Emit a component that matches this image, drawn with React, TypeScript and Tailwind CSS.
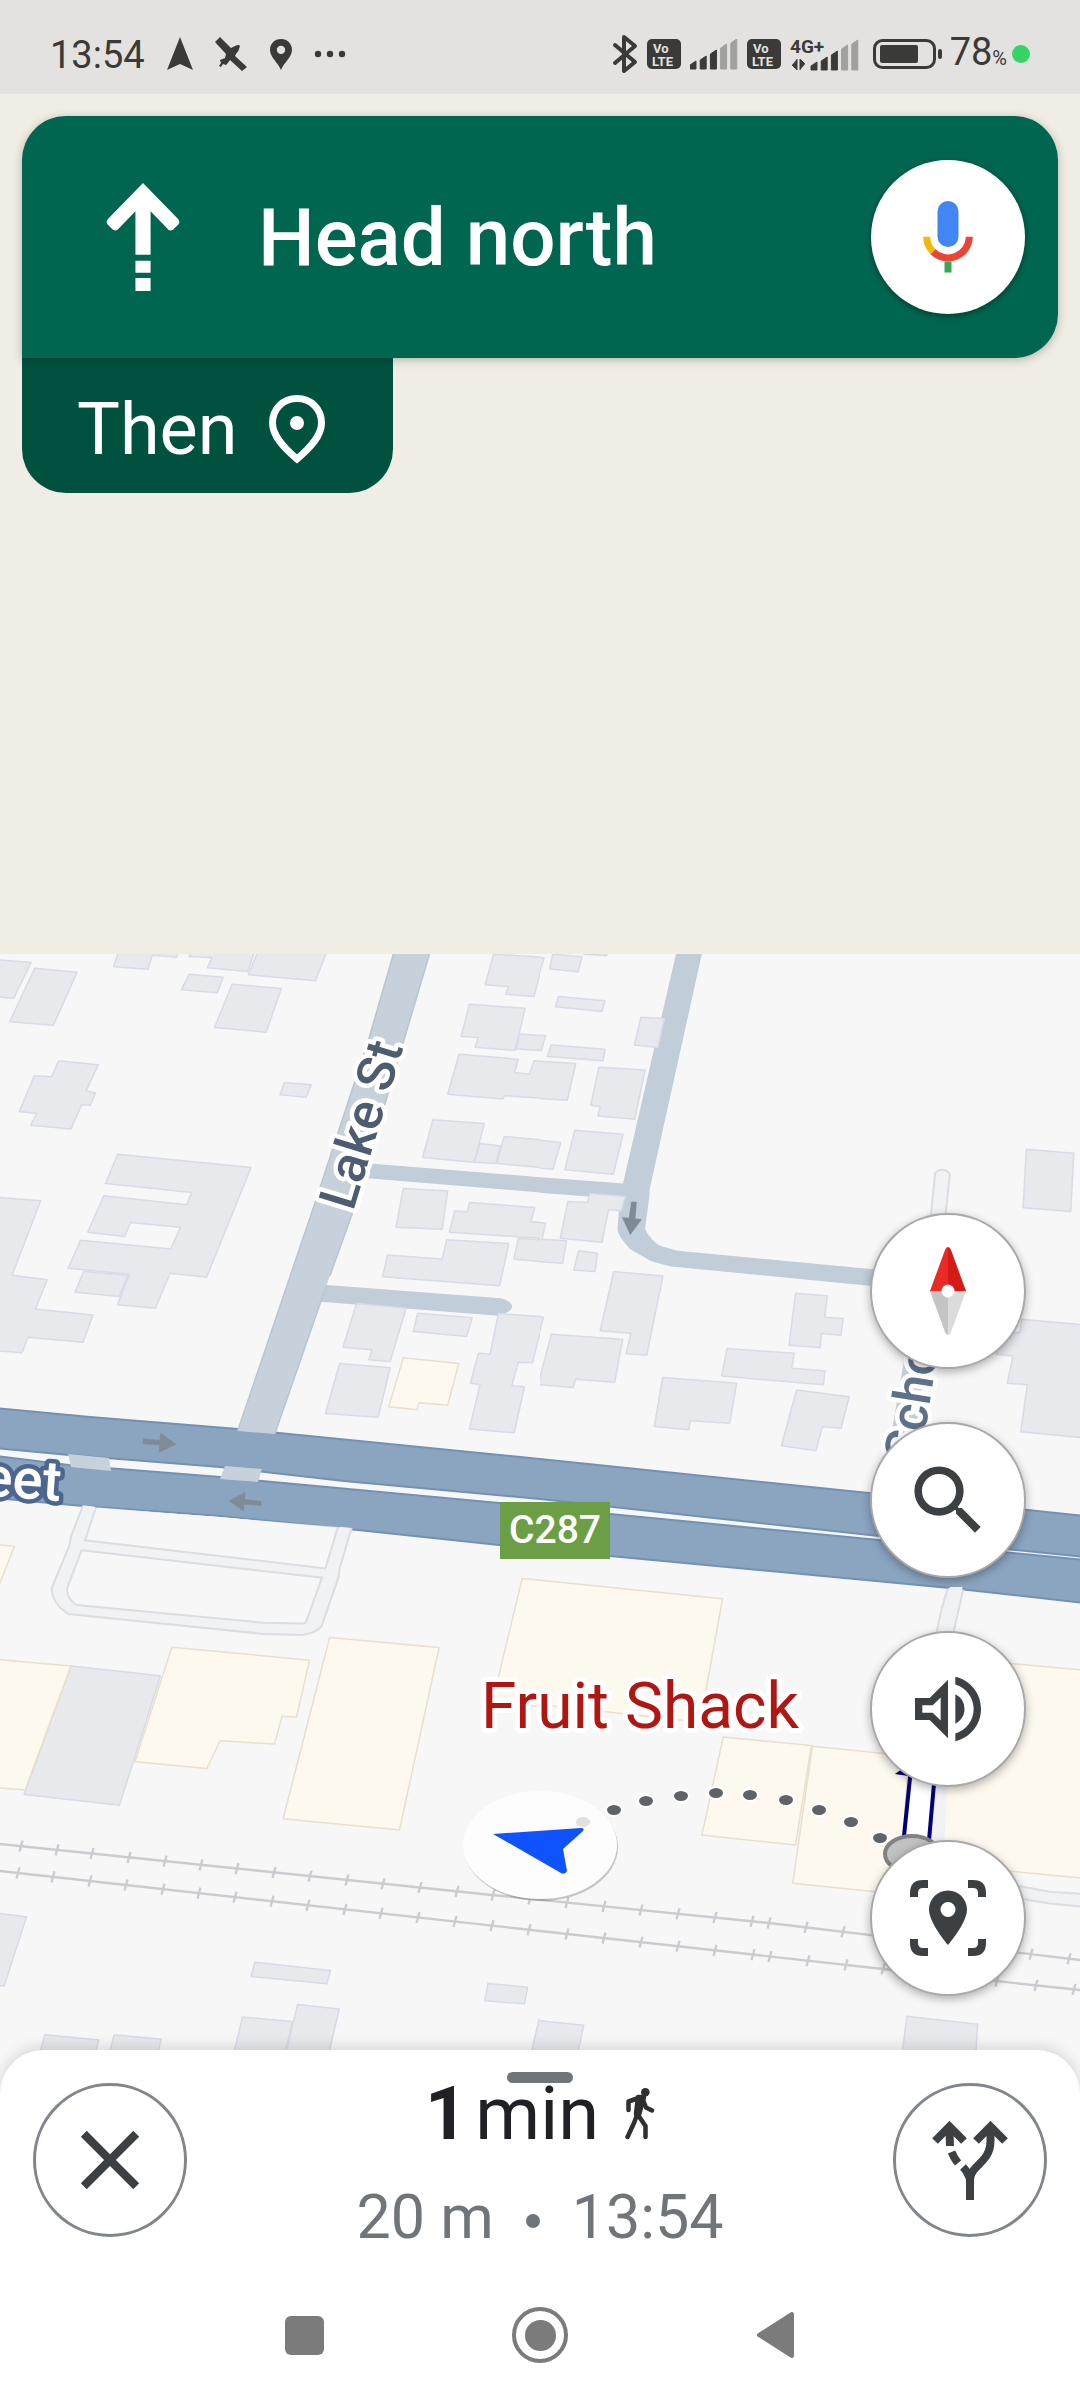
import type { ReactNode } from "react";
import { MdClose, MdOutlineVolumeUp, MdSearch } from "react-icons/md";

const INK = "#3a3a38";

/* ---------- status bar ---------- */

function VoLte() {
  return (
    <svg width="34" height="30" viewBox="0 0 34 30" aria-label="VoLTE">
      <rect width="34" height="30" rx="5" fill={INK} />
      <text x="6" y="14" fontSize="13" fontWeight="700" fill="#e3e2e0" fontFamily="Roboto, sans-serif">Vo</text>
      <text x="5" y="27" fontSize="13" fontWeight="700" fill="#e3e2e0" fontFamily="Roboto, sans-serif">LTE</text>
    </svg>
  );
}

function Bars({ x = 0, from = 0 }: { x?: number; from?: number }) {
  const heights = [8, 13, 19, 25, 30];
  return (
    <g>
      {heights.map((h, i) => {
        const l = x + i * 10.2;
        return (
          <path
            key={h}
            d={`M${l} ${30}V${30 - h + 4}l6-4V30z`}
            fill={i < 3 ? INK : "#a0a09e"}
            stroke={i < 3 ? INK : "#a0a09e"}
            strokeWidth="1"
            strokeLinejoin="round"
            transform={`translate(0 ${from})`}
          />
        );
      })}
    </g>
  );
}

function StatusBar() {
  return (
    <header className="flex h-[94px] items-center justify-between bg-[#e3e2e0] pt-[14px] pr-[50px] pl-[50px] text-[#3a3a38]">
      <div className="flex items-center gap-[22px]">
        <span className="pt-[2px] text-[38px] leading-10">13:54</span>
        <svg width="26" height="34" viewBox="0 0 26 34" fill={INK} aria-hidden="true">
          <path d="M13 0 26 33 13 27 0 33z" />
        </svg>
        <svg width="33" height="34" viewBox="0 0 33 34" fill={INK} aria-hidden="true">
          <path d="M0 5 5 0l11 11 4-2q4-2 5 0-1 5-4 8l-1 2 12 11-5 4-12-11q-2 3-4 5l-3-1-2 3-2-1 2-3q-1-2-1-3l5-2 1-4z" />
        </svg>
        <svg width="22" height="31" viewBox="5 2 14 20" fill={INK} preserveAspectRatio="none" aria-hidden="true">
          <path d="M12 2C8 2 5 5 5 9c0 5 5 8 7 13 2-5 7-8 7-13 0-4-3-7-7-7zm0 9.700a2.700 2.700 0 1 1 0-5.400 2.700 2.700 0 0 1 0 5.400z" />
        </svg>
        <svg width="32" height="8" viewBox="0 0 32 8" fill={INK} aria-hidden="true">
          <circle cx="4" cy="4" r="3.200" />
          <circle cx="16" cy="4" r="3.200" />
          <circle cx="28" cy="4" r="3.200" />
        </svg>
      </div>
      <div className="flex items-center gap-[9px]">
        <svg width="26" height="40" viewBox="0 0 26 40" fill="none" stroke={INK} strokeWidth="4" strokeLinecap="round" strokeLinejoin="round" aria-label="Bluetooth">
          <path d="M3 11 23 28 12 37V3L23 12 3 29" />
        </svg>
        <VoLte />
        <svg width="48" height="31" viewBox="0 0 48 31" aria-label="Signal 1">
          <Bars />
        </svg>
        <VoLte />
        <svg width="70" height="42" viewBox="0 -4 70 42" aria-label="Signal 2">
          <text x="0" y="16" fontSize="19" fontWeight="700" fill={INK} fontFamily="Roboto, sans-serif">4G+</text>
          <path d="M2 28l5 5V22M10 33V22l5 5" fill={INK} stroke={INK} strokeWidth="1" />
          <Bars x={21} from={3} />
        </svg>
        <svg width="70" height="30" viewBox="0 0 70 30" className="ml-1" aria-label="Battery">
          <rect x="1.500" y="1.500" width="60" height="27" rx="8" fill="none" stroke={INK} strokeWidth="3" />
          <rect x="7" y="6" width="38" height="18" rx="2" fill={INK} />
          <rect x="65" y="10" width="4" height="10" rx="2" fill={INK} />
        </svg>
        <div className="-ml-[2px] flex items-baseline pt-[2px]">
          <span className="text-[38px] leading-10">78</span>
          <span className="text-[20px] leading-10">%</span>
        </div>
        <span className="-ml-1 size-[18px] rounded-full bg-[#36d366]" />
      </div>
    </header>
  );
}

/* ---------- directions ---------- */

function Directions() {
  return (
    <section className="h-[860px] shrink-0 px-[22px] pt-[22px] text-white">
      <div className="relative flex h-[242px] items-center rounded-[44px] rounded-bl-none bg-[#00664f] pr-[33px] pl-[84px] shadow-[0_2px_10px_rgba(0,0,0,0.25)]">
        <svg width="74" height="108" viewBox="0 0 72 107" fill="#fff" aria-hidden="true">
          <path d="M36 0 71 36q2 3 0 5l-5 5q-3 2-5 0L43.500 28V71h-15V28L11 46q-2 2-5 0l-5-5q-2-2 0-5zM28.500 77h15v12h-15zM28.500 94h15v13h-15z" />
        </svg>
        <h1 className="ml-[78px] flex-1 pt-[2px] text-[80px] leading-[96px] font-medium">Head north</h1>
        <button type="button" aria-label="Voice search" className="flex size-[154px] items-center justify-center rounded-full bg-white shadow-[0_2px_6px_rgba(0,0,0,0.4)]">
          <svg width="50" height="72" viewBox="0 0 50 72" fill="none" aria-hidden="true">
            <rect x="14.500" width="21" height="46" rx="10.500" fill="#4285f4" />
            <path d="M3.700 35.700A21.300 21.300 0 0 0 10 50.700" stroke="#f4b70a" strokeWidth="7" />
            <path d="M10 50.700A21.300 21.300 0 0 0 46.300 35.700" stroke="#ea4637" strokeWidth="7" />
            <path d="M25 60.500V71.500" stroke="#34a853" strokeWidth="7" />
          </svg>
        </button>
      </div>
      <div className="flex h-[135px] w-[371px] items-center gap-[31px] rounded-b-[44px] bg-[#00523f] pt-2 pl-[55px]">
        <span className="text-[72px] leading-[80px]">Then</span>
        <svg width="56" height="70" viewBox="0 0 56 70" fill="none" stroke="#fff" strokeWidth="7" aria-hidden="true">
          <path d="M28 3.500C14 3.500 3.500 14 3.500 28 3.500 41 15 53 28 64 41 53 52.500 41 52.500 28 52.500 14 42 3.500 28 3.500z" />
          <circle cx="28" cy="28" r="7" fill="#fff" stroke="none" />
        </svg>
      </div>
    </section>
  );
}

/* ---------- map ---------- */

const GREY_NW = [
  "-10,55 90,63 40,163 -10,160",
  "101,79 224,90 155,239 28,229",
  "345,30 520,30 513,48 442,43 430,82 330,75",
  "555,30 740,30 719,88 602,78 616,50 549,46",
  "750,30 950,30 916,114 721,97",
  "549,96 648,104 631,148 527,139",
  "674,124 817,136 773,258 623,245",
  "170,338 286,349 249,423 277,428 262,463 237,461 206,529 89,519 106,486 56,480 100,380 150,383",
  "826,399 904,405 889,440 813,433",
  "342,600 729,637 600,944 494,933 451,1031 341,1021 376,936 198,919 234,841 496,865 524,804 379,791 362,830 255,818 301,716 542,741 557,707 306,682",
  "243,928 371,939 346,998 218,986",
  "-10,720 118,730 35,939 137,951 103,1033 270,1050 241,1126 81,1112 64,1156 -10,1150",
  "1433,40 1580,48 1551,158 1469,152 1476,130 1409,125",
  "1363,180 1525,191 1496,309 1380,300 1388,273 1339,270",
  "1509,263 1580,268 1580,310 1499,305",
  "1333,320 1505,334 1494,372 1537,375 1551,338 1580,340 1580,443 1464,436 1460,445 1300,432",
  "1257,503 1406,514 1377,622 1227,609",
  "1394,570 1453,576 1440,626 1377,622",
  "1464,550 1580,560 1580,638 1443,626",
  "1171,696 1300,703 1284,810 1150,804",
  "1363,735 1553,749 1541,788 1580,792 1580,836 1305,818 1320,759 1357,761",
  "1297,839 1477,850 1451,968 1111,943 1125,882 1284,893",
  "1505,836 1580,840 1580,901 1492,894",
  "1035,1018 1179,1031 1133,1180 1071,1175 1080,1147 996,1140",
  "1213,1045 1371,1058 1355,1110 1200,1096",
  "986,1186 1133,1198 1098,1336 945,1326",
  "1447,1046 1580,1055 1546,1184 1505,1182 1486,1248 1523,1251 1493,1380 1363,1369 1394,1245 1366,1241 1389,1157 1423,1159",
];

const GREY_NE = [
  "37,40 122,47 111,89 28,81",
  "-10,46 12,50 -10,120",
  "120,38 195,38 193,44 130,40",
  "54,158 189,170 180,200 45,187",
  "-10,265 16,268 4,310 -10,308",
  "32,294 189,306 183,338 22,326",
  "-10,339 104,346 79,449 -10,443",
  "293,216 361,220 342,301 274,294",
  "171,356 305,364 275,502 168,493 175,466 147,463",
  "101,533 241,544 213,656 72,643",
  "-10,560 60,567 38,642 -10,638",
  "145,710 247,718 236,758 199,755 180,846 59,835 81,732 138,735",
  "-10,790 16,793 6,838 77,842 66,905 -10,900",
  "112,870 167,877 160,928 98,925",
  "214,928 357,941 310,1163 250,1158 264,1101 175,1094",
  "-10,1052 10,1056 -5,1110 -10,1110",
  "33,1104 240,1118 217,1238 103,1230 97,1253 -6,1245",
  "356,1225 571,1241 551,1353 436,1346 432,1371 332,1362",
  "543,1144 738,1157 731,1199 827,1206 823,1245 527,1221",
  "742,989 834,996 827,1056 880,1060 874,1107 817,1102 814,1141 723,1135",
  "745,1260 898,1279 874,1367 820,1363 801,1430 701,1416",
  "1412,586 1550,597 1541,760 1403,750",
  "1399,1062 1580,1078 1580,1394 1396,1377 1415,1245 1357,1241 1373,1165 1325,1160 1340,1095 1394,1100",
];

const GREY_SW = [
  "206,503 466,529 347,879 70,850",
  "-10,1171 77,1181 12,1368 -10,1366",
  "740,1304 960,1326 949,1362 729,1342",
  "864,1418 985,1430 945,1590 820,1590",
  "704,1452 850,1464 815,1590 668,1590",
  "130,1500 287,1514 262,1600 100,1600",
  "331,1500 468,1512 445,1600 305,1600",
  "1417,1361 1532,1371 1523,1416 1408,1408",
  "1565,1458 1700,1470 1680,1600 1530,1600",
];

const GREY_SE = [
  "-10,1461 127,1474 100,1590 -10,1590",
  "1065,1450 1271,1471 1262,1600 1045,1600",
];

const SAND_NW = ["1171,1170 1332,1186 1300,1303 1217,1296 1211,1315 1129,1307"];

const SAND_SW = [
  "-10,175 42,179 -5,290 -10,290",
  "-10,485 206,503 73,838 -10,832",
  "499,452 899,487 861,641 819,639 797,714 639,705 601,780 392,762",
  "957,426 1275,453 1160,946 822,916",
  "1516,267 1600,272 1600,615 1430,600",
];

const SAND_SE = [
  "-10,270 530,321 465,655 -10,606",
  "532,695 788,718 742,987 470,960",
  "791,720 1070,746 1045,1120 734,1090",
  "1190,480 1366,496 1590,515 1590,1078 1370,1058 1165,1040",
];

function Buildings({ shapes, sand = false }: { shapes: string[]; sand?: boolean }) {
  return (
    <g fill={sand ? "#fdf9ef" : "#e8e9ed"} stroke={sand ? "#e8dfcc" : "#d8dbe7"} strokeWidth="1.500" strokeLinejoin="round">
      {shapes.map((points) => (
        <polygon key={points} points={points} vectorEffect="non-scaling-stroke" />
      ))}
    </g>
  );
}

/* Each quadrant of the map is surveyed in its own 1568-unit grid. */
function Quadrant({ x, south = false, children }: { x: number; south?: boolean; children: ReactNode }) {
  return (
    <svg
      x={x}
      y={south ? 1490 : 940}
      width="540"
      height={south ? 570 : 550}
      viewBox={south ? "0 27 1568 1541" : "0 0 1568 1540"}
      preserveAspectRatio="none"
    >
      {children}
    </svg>
  );
}

type Pt = [number, number];

const RAIL_A: Pt[] = [[0, 1844], [492, 1895], [769, 1923], [1080, 1960]];
const RAIL_B: Pt[] = [[0, 1871], [540, 1931], [883, 1969], [1080, 1990]];
const TIES_A = [21, 57, 92, 129, 165, 201, 237, 274, 310, 347, 383, 420, 457, 493, 530, 567, 604, 641, 678, 715, 752, 769, 806, 843, 880, 1031, 1069];
const TIES_B = [18, 53, 90, 126, 163, 199, 235, 272, 308, 345, 381, 418, 455, 492, 529, 567, 604, 641, 678, 715, 753, 770, 808, 846, 883, 997, 1036, 1074];

function railY(line: Pt[], x: number) {
  const i = Math.max(1, line.findIndex((p) => p[0] >= x));
  const [x0, y0] = line[i - 1];
  const [x1, y1] = line[i];
  return y0 + ((y1 - y0) * (x - x0)) / (x1 - x0);
}

function Rail({ line, ties }: { line: Pt[]; ties: number[] }) {
  return (
    <g fill="none" stroke="#cacccf" strokeWidth="2.400">
      <polyline points={line.map((p) => p.join(",")).join(" ")} />
      {ties.map((x) => {
        const y = railY(line, x);
        return <line key={x} x1={x + 1.500} y1={y - 5.500} x2={x - 1.500} y2={y + 5.500} />;
      })}
    </g>
  );
}

const WALK: Pt[] = [[614, 1810], [646, 1801], [681, 1796], [716, 1793], [750, 1795], [786, 1800], [819, 1810], [851, 1822], [880, 1838]];

function MapView() {
  return (
    <svg className="absolute inset-0 size-full" viewBox="0 954 1080 1144" preserveAspectRatio="xMidYMin slice" fontFamily="Roboto, sans-serif" role="img" aria-label="Map">
      <rect x="0" y="954" width="1080" height="1144" fill="#f7f7f7" />

      <Rail line={RAIL_A} ties={TIES_A} />
      <Rail line={RAIL_B} ties={TIES_B} />

      {/* C287, two carriageways */}
      <g fill="#8ba4c0" stroke="#7391b3" strokeWidth="2">
        <path d="M-5 1408 90 1417 238 1429 540 1459 869 1493 1085 1516V1557L879 1536 540 1499 344 1481 220 1467 69 1455-5 1448z" />
        <path d="M-5 1456 69 1465 220 1477 499 1503 610 1514 879 1540 1085 1560V1603L950 1588 610 1556 499 1545 339 1528 220 1516 83 1506-5 1498z" />
      </g>
      <g fill="#c6d1dc">
        <path d="M68 1454 109 1458 111 1471 71 1467z" />
        <path d="M225 1466 262 1469 258 1482 220 1479z" />
      </g>

      <Quadrant x={0}>
        <path d="M1075 626 1580 665V708L1068 667zM948 966 1455 1003Q1487 1012 1487 1028 1480 1045 1447 1052L930 1013z" fill="#c1cdd9" />
        <path d="M1145 30 1070 280 915 735 690 1375 798 1383 948 967 1025 760 1170 290 1250 30z" fill="#c6d1dc" />
        <path d="M1145 30 1070 280 915 735 690 1375M798 1383 948 967M958 940 1025 760 1170 290 1250 30" fill="none" stroke="#b8c6cf" strokeWidth="1.500" vectorEffect="non-scaling-stroke" />
        <Buildings shapes={GREY_NW} />
        <Buildings shapes={SAND_NW} sand />
        <path d="M415 1396 463 1400 466 1380 512 1412 461 1436 463 1415 415 1411z" fill="#808b98" />
      </Quadrant>

      <Quadrant x={540}>
        <path d="M397 30H472L318 700V715L305 810Q325 845 350 857L400 870 1000 925V972L380 914 325 900 262 866Q228 830 225 812L230 750 243 720 140 718-5 707V664L241 682z" fill="#c1cdd9" />
        <path d="M1062 1150 1125 1150 1080 1440 1010 1440z" fill="#c1cdd9" />
        <path d="M1133 790 1147 655Q1152 643 1168 643 1188 645 1190 658L1175 790z" fill="#f1f2f4" stroke="#dcdde1" strokeWidth="2" vectorEffect="non-scaling-stroke" />
        <Buildings shapes={GREY_NE} />
        <path d="M265 733H281L277 780 296 782 262 826 238 776 258 778z" fill="#808b98" />
      </Quadrant>

      <Quadrant x={0} south>
        <g fill="#f1f2f4" stroke="#dcdde1" strokeWidth="2">
          <path d="M240 72 207 150 200 180 150 292Q152 335 198 362L765 416 880 419Q920 412 934 395L984 260 986 240 1020 132 984 130 278 76z" vectorEffect="non-scaling-stroke" />
          <g fill="#f7f7f7">
            <path d="M278 76 247 163 945 239 980 130 640 100z" stroke="none" />
            <path d="M278 76 247 163 945 239 980 130" vectorEffect="non-scaling-stroke" />
            <path d="M237 190 935 264 890 380Q888 388 875 388L765 386 222 338Q192 318 195 292z" vectorEffect="non-scaling-stroke" />
          </g>
        </g>
        <path d="M243 68 277 72 274 84 238 80zM986 127 1018 130 1014 142 982 140z" fill="#f1f2f4" />
        <Buildings shapes={GREY_SW} />
        <Buildings shapes={SAND_SW} sand />
        <path d="M664 56 713 32 711 52 759 57 758 70 709 66 708 85z" fill="#808b98" />
      </Quadrant>

      <Quadrant x={540} south>
        <path d="M1192 289H1227L1198 430H1150Q1165 350 1185 294z" fill="#f1f2f4" />
        <path d="M1229 296 1196 430M1148 430Q1163 350 1184 294" fill="none" stroke="#dcdde1" strokeWidth="2" vectorEffect="non-scaling-stroke" />
        <Buildings shapes={GREY_SE} />
        <Buildings shapes={SAND_SE} sand />
        <path d="M1072 780H1186L1170 1040H1045z" fill="#f1f2f4" />
        <path d="M1380 1096 1480 1113 1580 1119V1154L1480 1145 1380 1130z" fill="#f1f2f4" stroke="#dcdde1" strokeWidth="2" vectorEffect="non-scaling-stroke" />
        <path d="M1076 790H1148L1128 980H1055z" fill="#fff" />
        <path d="M1076 790 1055 980M1146 800 1129 980" stroke="#00007a" strokeWidth="4" vectorEffect="non-scaling-stroke" />
        <path d="M1030 795 1062 775 1085 802z" fill="#00007a" />
      </Quadrant>

      <ellipse cx="912" cy="1854" rx="27" ry="18" fill="#c1c1c1" stroke="#828282" strokeWidth="4" />

      {WALK.map(([x, y]) => (
        <ellipse key={x} cx={x} cy={y} rx="8" ry="6" fill="#5f6368" stroke="#fff" strokeWidth="2" />
      ))}

      {/* labels */}
      <g strokeLinejoin="round" paintOrder="stroke" fontWeight="500">
        <text transform="translate(353 1212) rotate(-73)" fontSize="52" fill="#4d5c70" stroke="#fff" strokeWidth="9">Lake St</text>
        <text transform="translate(920 1464) rotate(-81)" fontSize="52" fill="#5f708a" stroke="#fff" strokeWidth="9">School</text>
        <text transform="translate(60 1501) rotate(4)" textAnchor="end" fontSize="56" fill="#fff" stroke="#4c6690" strokeWidth="9">Street</text>
        <text x="481" y="1728" fontSize="64" fontWeight="400" fill="#b01713" stroke="#fff" strokeWidth="10">Fruit Shack</text>
      </g>
      <rect x="500" y="1502" width="110" height="57" fill="#6c9f45" />
      <text x="555" y="1543" textAnchor="middle" fontSize="39" fontWeight="500" fill="#fff">C287</text>

      {/* position puck */}
      <ellipse cx="541" cy="1847" rx="77" ry="54" fill="#000" opacity="0.2" />
      <ellipse cx="540" cy="1845" rx="77" ry="54" fill="#fdfdfd" />
      <ellipse cx="583" cy="1822" rx="7" ry="5" fill="#dfe0e1" />
      <path d="M493 1834 581 1828Q585 1828 583 1831L563 1849 567 1871Q565 1875 561 1873z" fill="#0f53ff" />
    </svg>
  );
}

function Fab({ label, children }: { label: string; children: ReactNode }) {
  return (
    <button
      type="button"
      aria-label={label}
      className="flex size-[156px] items-center justify-center rounded-full border-2 border-[#a8a8a8] bg-white text-[#3c4043] shadow-[0_3px_10px_rgba(0,0,0,0.3)]"
    >
      {children}
    </button>
  );
}

function MapSection() {
  return (
    <main className="relative min-h-[1144px] flex-1 overflow-hidden bg-[#f7f7f7]">
      <MapView />
      <div className="absolute top-[259px] right-[54px] flex flex-col gap-[53px]">
        <Fab label="Compass">
          <svg width="36" height="88" viewBox="0 0 36 88" aria-hidden="true">
            <path d="M18 0Q16 0 15 3L0 44H18z" fill="#ea2a26" />
            <path d="M18 0Q20 0 21 3L36 44H18z" fill="#d51b17" />
            <path d="M0 44H18V88Q16 88 15 85z" fill="#c4c4c4" />
            <path d="M36 44H18V88Q20 88 21 85z" fill="#dbdbdb" />
            <circle cx="18" cy="44" r="6.500" fill="#fff" />
          </svg>
        </Fab>
        <Fab label="Search">
          <MdSearch size={91} />
        </Fab>
        <Fab label="Sound">
          <MdOutlineVolumeUp size={88} />
        </Fab>
        <Fab label="Live View">
          <svg width="76" height="76" viewBox="0 0 76 76" fill="none" aria-hidden="true">
            <path d="M4 17V13Q4 4 13 4H18M58 4H63Q72 4 72 13V17M72 59V63Q72 72 63 72H58M18 72H13Q4 72 4 63V59" stroke="currentColor" strokeWidth="8" />
            <path
              transform="translate(5.400 5)"
              d="M32.600 5.400C22 5.400 13.600 14 13.600 24.500 13.600 38 32.600 60 32.600 60S51.600 38 51.600 24.500C51.600 14 43.200 5.400 32.600 5.400zM32.600 32a7.500 7.500 0 1 1 0-15 7.500 7.500 0 0 1 0 15z"
              fill="currentColor"
            />
          </svg>
        </Fab>
      </div>
    </main>
  );
}

/* ---------- trip sheet ---------- */

function TripSheet() {
  return (
    <section className="relative -mt-12 flex h-[350px] shrink-0 flex-col rounded-t-[44px] bg-white shadow-[0_-4px_14px_rgba(0,0,0,0.12)]">
      <div className="flex items-start justify-between px-[33px] pt-[33px]">
        <button type="button" aria-label="Close" className="flex size-[154px] items-center justify-center rounded-full border-3 border-[#80868b] text-[#3c4043]">
          <MdClose size={100} />
        </button>
        <div className="flex flex-col items-center">
          <div className="flex items-center gap-[26px] text-[#202124]">
            <p className="flex gap-2 text-[74px] leading-[62px]">
              <span className="font-bold">1</span>
              <span>min</span>
            </p>
            <svg width="30" height="52" viewBox="0 0 30 52" fill="none" stroke="#303030" strokeWidth="4.500" strokeLinecap="round" strokeLinejoin="round" aria-label="Walking">
              <circle cx="20.300" cy="4.300" r="4.300" fill="#303030" stroke="none" />
              <path d="M3.500 22V13.500L15 9.500" />
              <path d="M13 9 19 9 14 27 11 26z" fill="#303030" />
              <path d="M18 12 21 19.500 27 22.500" />
              <path d="M12 27 9 35 2.500 49" />
              <path d="M13 27 20.500 38V49" />
            </svg>
          </div>
          <p className="mt-[36px] flex gap-[32px] text-[61px] leading-[72px] text-[#70757a]">
            <span>20 m</span>
            <span className="mt-[33px] size-[14px] rounded-full bg-[#70757a]" />
            <span>13:54</span>
          </p>
        </div>
        <button type="button" aria-label="Alternative routes" className="flex size-[154px] items-center justify-center rounded-full border-3 border-[#80868b] text-[#3c4043]">
          <svg width="76" height="79" viewBox="0 0 76 79" fill="none" stroke="currentColor" strokeWidth="8" aria-hidden="true">
            <path d="M3 20 17.500 5.500 32 20M44 20 58.500 5.500 73 20" />
            <path d="M58.500 8V20C58.500 42 38 44 38 59V79" />
            <path d="M17.500 8 18 25M19.500 31Q22 37 26 42M31 46Q36 51 38 58" />
          </svg>
        </button>
      </div>
      <div className="absolute top-[22px] left-1/2 h-[11px] w-[66px] -translate-x-1/2 rounded-full bg-[#70757a]" />
      <nav className="mt-[54px] flex justify-center gap-[180px]">
        <button type="button" aria-label="Recent apps" className="flex size-[56px] items-center justify-center">
          <span className="size-[39px] rounded-md bg-[#7b7b7b]" />
        </button>
        <button type="button" aria-label="Home" className="flex size-[56px] items-center justify-center rounded-full border-4 border-[#7b7b7b]">
          <span className="size-[31px] rounded-full bg-[#7b7b7b]" />
        </button>
        <button type="button" aria-label="Back" className="flex size-[56px] items-center justify-center">
          <svg width="38" height="48" viewBox="0 0 38 48" fill="#7b7b7b" stroke="#7b7b7b" strokeWidth="4" strokeLinejoin="round" aria-hidden="true">
            <path d="M2 24 35 3V45z" />
          </svg>
        </button>
      </nav>
    </section>
  );
}

export default function App() {
  return (
    <div className="flex min-h-screen flex-col bg-[#f0ede4] font-['Roboto',sans-serif]">
      <StatusBar />
      <Directions />
      <MapSection />
      <TripSheet />
    </div>
  );
}
